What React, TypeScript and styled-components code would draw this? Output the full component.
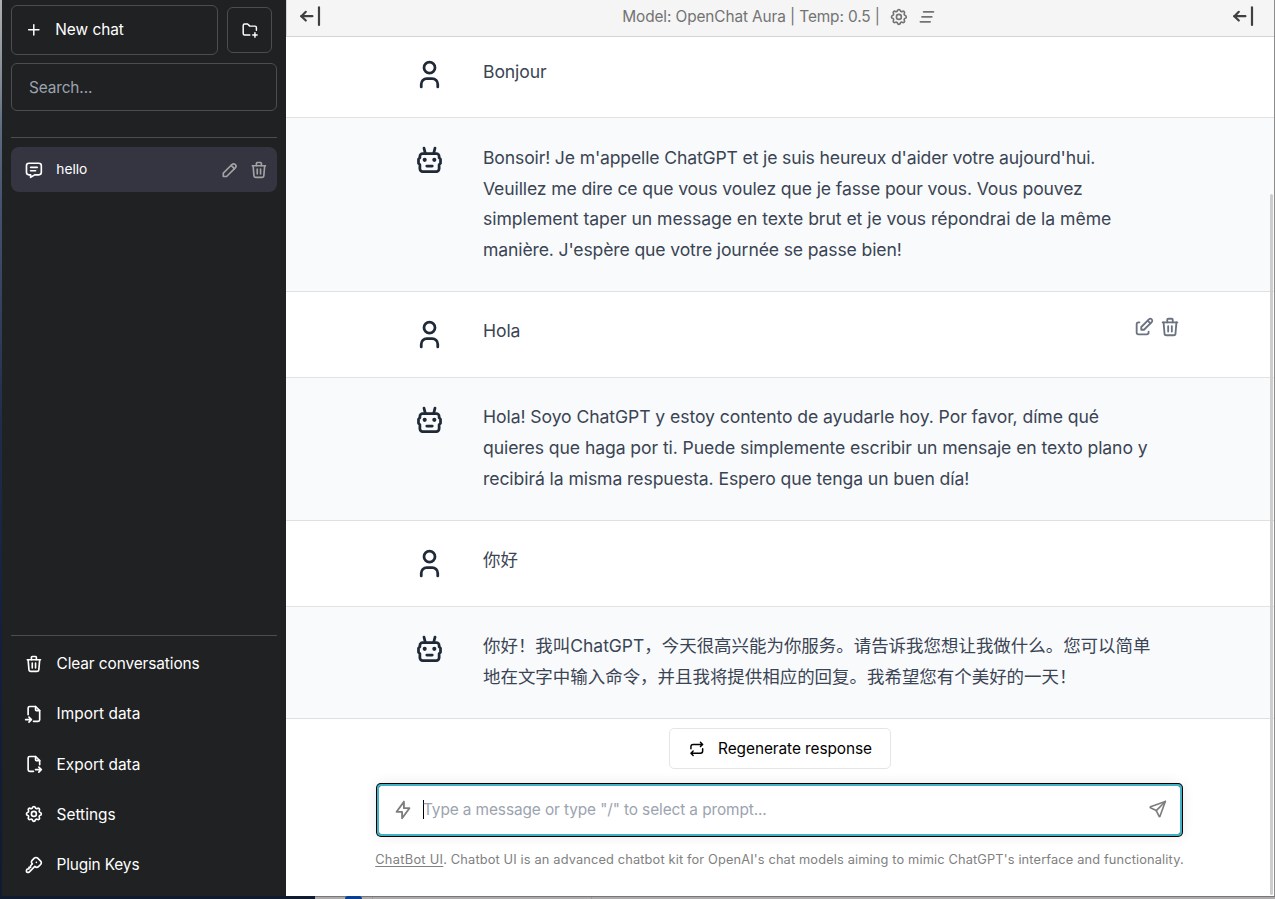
import React from 'react';
import styled, { createGlobalStyle } from 'styled-components';

const GlobalStyle = createGlobalStyle`
  *, *::before, *::after { box-sizing: border-box; }
  body {
    margin: 0;
    overflow: hidden;
    font-family: Inter, "Noto Sans CJK SC", sans-serif;
  }
  button, input { font: inherit; color: inherit; letter-spacing: inherit; background: none; border: 0; padding: 0; margin: 0; }
  svg { display: block; flex: none; }
`;

const ICONS: Record<string, string[]> = {
  plus: ['M12 5v14', 'M5 12h14'],
  folderPlus: ['M12 19h-7a2 2 0 0 1 -2 -2v-11a2 2 0 0 1 2 -2h4l3 3h7a2 2 0 0 1 2 2v3.5', 'M16 19h6', 'M19 16v6'],
  message: ['M8 9h8', 'M8 13h6', 'M18 4a3 3 0 0 1 3 3v8a3 3 0 0 1 -3 3h-5l-5 3v-3h-2a3 3 0 0 1 -3 -3v-8a3 3 0 0 1 3 -3h12z'],
  pencil: ['M4 20h4l10.5 -10.5a1.5 1.5 0 0 0 -4 -4l-10.5 10.5v4', 'M13.5 6.5l4 4'],
  trash: ['M4 7l16 0', 'M10 11l0 6', 'M14 11l0 6', 'M5 7l1 12a2 2 0 0 0 2 2h8a2 2 0 0 0 2 -2l1 -12', 'M9 7v-3a1 1 0 0 1 1 -1h4a1 1 0 0 1 1 1v3'],
  fileImport: ['M14 3v4a1 1 0 0 0 1 1h4', 'M5 13v-8a2 2 0 0 1 2 -2h7l5 5v11a2 2 0 0 1 -2 2h-5.5m-9.5 -2h7m-3 -3l3 3l-3 3'],
  fileExport: ['M14 3v4a1 1 0 0 0 1 1h4', 'M11.5 21h-4.5a2 2 0 0 1 -2 -2v-14a2 2 0 0 1 2 -2h7l5 5v5m-5 6h7m-3 -3l3 3l-3 3'],
  settings: [
    'M10.325 4.317c.426 -1.756 2.924 -1.756 3.35 0a1.724 1.724 0 0 0 2.573 1.066c1.543 -.94 3.31 .826 2.37 2.37a1.724 1.724 0 0 0 1.065 2.572c1.756 .426 1.756 2.924 0 3.35a1.724 1.724 0 0 0 -1.066 2.573c.94 1.543 -.826 3.31 -2.37 2.37a1.724 1.724 0 0 0 -2.572 1.065c-.426 1.756 -2.924 1.756 -3.35 0a1.724 1.724 0 0 0 -2.573 -1.066c-1.543 .94 -3.31 -.826 -2.37 -2.37a1.724 1.724 0 0 0 -1.065 -2.572c-1.756 -.426 -1.756 -2.924 0 -3.35a1.724 1.724 0 0 0 1.066 -2.573c-.94 -1.543 .826 -3.31 2.37 -2.37c1 .608 2.296 .07 2.572 -1.065z',
    'M9 12a3 3 0 1 0 6 0a3 3 0 0 0 -6 0',
  ],
  key: [
    'M16.555 3.843l3.602 3.602a2.877 2.877 0 0 1 0 4.069l-2.643 2.643a2.877 2.877 0 0 1 -4.069 0l-.301 -.301l-6.558 6.558a2 2 0 0 1 -1.239 .578l-.175 .008h-1.172a1 1 0 0 1 -.993 -.883l-.007 -.117v-1.172a2 2 0 0 1 .467 -1.284l.119 -.13l.414 -.414h2v-2h2v-2l2.144 -2.144l-.301 -.301a2.877 2.877 0 0 1 0 -4.069l2.643 -2.643a2.877 2.877 0 0 1 4.069 0z',
    'M15 9h.01',
  ],
  user: ['M8 7a4 4 0 1 0 8 0a4 4 0 0 0 -8 0', 'M6 21v-2a4 4 0 0 1 4 -4h4a4 4 0 0 1 4 4v2'],
  robot: [
    'M7 7h10a2 2 0 0 1 2 2v1l1 1v3l-1 1v3a2 2 0 0 1 -2 2h-10a2 2 0 0 1 -2 -2v-3l-1 -1v-3l1 -1v-1a2 2 0 0 1 2 -2z',
    'M10 16h4',
    'M8 11.5a.5 .5 0 1 0 1 0a.5 .5 0 0 0 -1 0',
    'M15 11.5a.5 .5 0 1 0 1 0a.5 .5 0 0 0 -1 0',
    'M9 7l-1 -4',
    'M15 7l1 -4',
  ],
  clearAll: ['M8 6h12', 'M6 12h12', 'M4 18h12'],
  arrowBar: ['M4 12l10 0', 'M4 12l4 4', 'M4 12l4 -4', 'M20 4l0 16'],
  edit: ['M7 7h-1a2 2 0 0 0 -2 2v9a2 2 0 0 0 2 2h9a2 2 0 0 0 2 -2v-1', 'M20.385 6.585a2.1 2.1 0 0 0 -2.97 -2.97l-8.415 8.385v3h3l8.385 -8.415z', 'M16 5l3 3'],
  bolt: ['M13 3l0 7l6 0l-8 11l0 -7l-6 0l8 -11'],
  send: ['M10 14l11 -11', 'M21 3l-6.5 18a.55 .55 0 0 1 -1 0l-3.5 -7l-7 -3.5a.55 .55 0 0 1 0 -1l18 -6.5'],
  repeat: ['M4 12v-3a3 3 0 0 1 3 -3h13m-3 -3l3 3l-3 3', 'M20 12v3a3 3 0 0 1 -3 3h-13m3 3l-3 -3l3 -3'],
};

const Icon = ({ name, size = 19.8 }: { name: string; size?: number }) => (
  <svg width={size} height={size} viewBox="0 0 24 24" fill="none" stroke="currentColor" strokeWidth={2} strokeLinecap="round" strokeLinejoin="round">
    {ICONS[name].map((d) => <path key={d} d={d} />)}
  </svg>
);

const Desktop = styled.div`
  width: 1275px;
  height: 899px;
  display: flex;
  flex-direction: column;
  padding-left: 2px;
  background: linear-gradient(180deg, #b0b0b0 0, #8a909a 70px, #5c6b80 130px, #45556f 200px, #1f2d49 420px, #14203a 640px, #101a30 899px);
`;

const Window = styled.div`
  display: flex;
  height: 896px;
  background: #fff;
  border-right: 1px solid #8c8c8c;
`;

const Wallpaper = styled.div`
  flex: 1;
  display: flex;
  border-top: 1px solid #777;
  background: #adabab;
`;
const WallpaperDark = styled.div`
  width: 313px;
  margin-top: -1px;
  background: #111b30;
`;
const WallpaperLogo = styled.div`
  width: 17px;
  margin: -1px 0 0 30px;
  border-radius: 8px 8px 0 0;
  background: #0b3f92;
`;
const WallpaperPanel = styled.div`
  width: 220px;
  margin-left: 10px;
  border: solid #999;
  border-width: 0 1px;
`;

const Sidebar = styled.aside`
  width: 284px;
  display: flex;
  flex-direction: column;
  padding: 5px 9px 7px;
  background: #202123;
  color: #fff;
  font-size: 15.4px;
  letter-spacing: -0.03px;
`;

const TopActions = styled.div`
  display: flex;
  align-items: center;
  gap: 9px;
  height: 50px;
`;
const OutlineButton = styled.button<{ $w: number; $h: number }>`
  display: flex;
  align-items: center;
  gap: 13px;
  width: ${(p) => p.$w}px;
  height: ${(p) => p.$h}px;
  padding: 0 0 1px 12.7px;
  border: 1px solid #4d4d4f;
  border-radius: 6px;
`;
const SearchInput = styled.input`
  height: 48px;
  margin-top: 8px;
  padding: 0 17px;
  border: 1px solid #4d4d4f;
  border-radius: 6px;
  letter-spacing: -0.12px;
  &::placeholder { color: #9ca3af; opacity: 1; }
`;

const Conversations = styled.div`
  flex: 1;
  margin-top: 26px;
  padding-top: 9px;
  border-top: 1px solid #4d4d4f;
`;
const Conversation = styled.div`
  display: flex;
  align-items: center;
  height: 45px;
  padding: 0 8px 0 13px;
  border-radius: 8px;
  background: #343541;
  font-size: 13.75px;
  letter-spacing: 0;
`;
const ConversationName = styled.span`
  flex: 1;
  margin-left: 12.5px;
  padding-bottom: 2px;
`;
const RowActions = styled.div`
  display: flex;
  gap: 9.5px;
  color: #a3a3a3;
`;

const Menu = styled.nav`
  display: flex;
  flex-direction: column;
  gap: 4.4px;
  padding-top: 4.8px;
  height: 254px;
  border-top: 1px solid #4d4d4f;
`;
const MenuItem = styled.button<{ $track: number }>`
  display: flex;
  align-items: center;
  gap: 13px;
  height: 45.8px;
  padding-left: 12.7px;
  letter-spacing: ${(p) => p.$track}px;
`;

const Main = styled.main`
  flex: 1;
  display: flex;
  flex-direction: column;
  position: relative;
`;
const Header = styled.header`
  display: flex;
  align-items: center;
  justify-content: space-between;
  height: 37px;
  padding: 0 17.6px 4px 9.8px;
  border: solid #d4d4d4;
  border-width: 0 0 1px 1px;
  background: #f5f5f5;
  color: #404040;
`;
const ModelInfo = styled.div`
  display: flex;
  align-items: center;
  margin-left: 6px;
  padding-top: 1.4px;
  font-size: 15.4px;
  letter-spacing: -0.11px;
  color: #737373;
  white-space: pre;
  svg { margin-left: 8.8px; }
`;

const Message = styled.article<{ $bot?: boolean; $h: number }>`
  display: flex;
  height: ${(p) => p.$h}px;
  padding: 24px 91px 0 127px;
  border-bottom: 1px solid ${(p) => (p.$bot ? '#dfe0e2' : '#e2e2e3')};
  background: ${(p) => (p.$bot ? '#f9fafb' : '#fff')};
  color: #1f2937;
`;
const Avatar = styled.div`
  width: 70px;
  padding-top: 2px;
`;
const MessageText = styled.p<{ $size?: number; $shift?: number }>`
  width: 669px;
  margin: 0;
  padding-top: ${(p) => p.$shift ?? 0}px;
  font-size: ${(p) => p.$size ?? 17.6}px;
  line-height: 30.8px;
  color: #3a4454;
`;
const Line = styled.span<{ $track: number }>`
  letter-spacing: ${(p) => p.$track}px;
`;
const MessageActions = styled.div`
  display: flex;
  gap: 4px;
  margin-left: -19px;
  color: #6b7280;
`;

// The first message is partly scrolled under the header.
const Messages = styled.div`
  ${Message}:first-child { height: 81px; padding-top: 19px; }
`;

const Composer = styled.section`
  flex: 1;
  display: flex;
  flex-direction: column;
  align-items: center;
  padding-top: 9px;
  padding-right: 1px;
`;
const Regenerate = styled.button`
  display: flex;
  align-items: center;
  gap: 13px;
  width: 222px;
  height: 41px;
  padding-left: 18px;
  border: 1px solid #e5e5e5;
  border-radius: 5px;
  color: #000;
  font-size: 15.4px;
  letter-spacing: -0.07px;
`;
const InputBox = styled.div`
  display: flex;
  align-items: center;
  width: 801px;
  height: 48px;
  margin-top: 17px;
  padding: 0 12px 1px 13px;
  border-radius: 2px;
  box-shadow: 0 0 0 2px #43b1c5, 0 0 0 3px #000, 0 0 13px 2px rgba(0, 0, 0, 0.1);
  color: #7d7d7d;
`;
const Caret = styled.span`
  width: 1px;
  height: 19px;
  margin-left: 9px;
  background: #000;
`;
const MessageInput = styled.input`
  flex: 1;
  min-width: 0;
  margin-left: -1px;
  font-size: 15.4px;
  letter-spacing: -0.1px;
  outline: none;
  &::placeholder { color: #9ca3af; opacity: 1; }
`;
const SendIcon = styled.span`
  padding-bottom: 1px;
`;
const Footnote = styled.p`
  margin: 17px 0 0;
  font-size: 12.8px;
  line-height: 18px;
  letter-spacing: 0.146px;
  color: #808080;
  white-space: nowrap;
`;
const FootLink = styled.a`
  letter-spacing: 0.3px;
  text-decoration: underline;
  text-underline-offset: 2px;
`;
const ScrollThumb = styled.div`
  position: absolute;
  top: 194px;
  right: 1px;
  width: 3px;
  height: 701px;
  border-radius: 2px;
  background: #cdcdcd;
`;

const MENU: [string, string, number][] = [
  ['trash', 'Clear conversations', -0.09],
  ['fileImport', 'Import data', 0.04],
  ['fileExport', 'Export data', 0.04],
  ['settings', 'Settings', 0.03],
  ['key', 'Plugin Keys', -0.14],
];

type MessageData = {
  bot?: boolean;
  h: number;
  size?: number;
  shift?: number;
  actions?: boolean;
  // Each part is a run of text with its letter spacing.
  parts: [string, number][];
};

const MESSAGES: MessageData[] = [
  { h: 81, shift: 1, parts: [['Bonjour', -0.12]] },
  {
    bot: true,
    h: 174,
    shift: 0.8,
    parts: [
      ["Bonsoir! Je m'appelle ChatGPT et je suis heureux d'aider votre aujourd'hui. ", -0.15],
      ['Veuillez me dire ce que vous voulez que je fasse pour vous. Vous pouvez ', -0.125],
      ['simplement taper un message en texte brut et je vous répondrai de la même ', -0.05],
      ["manière. J'espère que votre journée se passe bien!", -0.14],
    ],
  },
  { h: 86, actions: true, parts: [['Hola', -0.1]] },
  {
    bot: true,
    h: 143,
    parts: [
      ['Hola! Soyo ChatGPT y estoy contento de ayudarle hoy. Por favor, díme qué ', -0.08],
      ['quieres que haga por ti. Puede simplemente escribir un mensaje en texto plano y ', -0.085],
      ['recibirá la misma respuesta. Espero que tenga un buen día!', -0.09],
    ],
  },
  { h: 86, size: 17.47, parts: [['你好', 0]] },
  {
    bot: true,
    h: 112,
    size: 17.47,
    parts: [['你好！我叫ChatGPT，今天很高兴能为你服务。请告诉我您想让我做什么。您可以简单地在文字中输入命令，并且我将提供相应的回复。我希望您有个美好的一天！', 0]],
  },
];

export default function App() {
  return (
    <Desktop>
      <GlobalStyle />
      <Window>
        <Sidebar>
          <TopActions>
            <OutlineButton $w={207} $h={50}><Icon name="plus" size={17.6} />New chat</OutlineButton>
            <OutlineButton $w={45} $h={46} aria-label="New folder"><Icon name="folderPlus" size={17.6} /></OutlineButton>
          </TopActions>
          <SearchInput placeholder="Search..." />
          <Conversations>
            <Conversation>
              <Icon name="message" />
              <ConversationName>hello</ConversationName>
              <RowActions><Icon name="pencil" /><Icon name="trash" /></RowActions>
            </Conversation>
          </Conversations>
          <Menu>
            {MENU.map(([icon, label, track]) => (
              <MenuItem key={label} $track={track}><Icon name={icon} />{label}</MenuItem>
            ))}
          </Menu>
        </Sidebar>
        <Main>
          <Header>
            <Icon name="arrowBar" size={26.4} />
            <ModelInfo>
              Model: OpenChat Aura | Temp: 0.5 |
              <Icon name="settings" />
              <Icon name="clearAll" />
            </ModelInfo>
            <Icon name="arrowBar" size={26.4} />
          </Header>
          <Messages>
            {MESSAGES.map((m, i) => (
              <Message key={i} $bot={m.bot} $h={m.h}>
                <Avatar><Icon name={m.bot ? 'robot' : 'user'} size={33} /></Avatar>
                <MessageText $size={m.size} $shift={m.shift}>
                  {m.parts.map(([text, track]) => <Line key={text} $track={track}>{text}</Line>)}
                </MessageText>
                {m.actions && <MessageActions><Icon name="edit" size={22} /><Icon name="trash" size={22} /></MessageActions>}
              </Message>
            ))}
          </Messages>
          <Composer>
            <Regenerate><Icon name="repeat" size={17.6} />Regenerate response</Regenerate>
            <InputBox>
              <Icon name="bolt" size={22} />
              <Caret />
              <MessageInput placeholder={'Type a message or type "/" to select a prompt...'} />
              <SendIcon><Icon name="send" /></SendIcon>
            </InputBox>
            <Footnote>
              <FootLink>ChatBot UI</FootLink>. Chatbot UI is an advanced chatbot kit for OpenAI's chat models aiming to mimic ChatGPT's interface and functionality.
            </Footnote>
          </Composer>
          <ScrollThumb />
        </Main>
      </Window>
      <Wallpaper>
        <WallpaperDark />
        <WallpaperLogo />
        <WallpaperPanel />
      </Wallpaper>
    </Desktop>
  );
}
